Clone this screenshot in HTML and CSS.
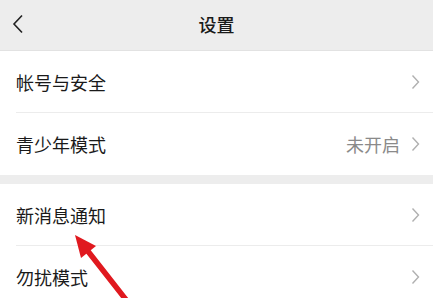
FILE: index.html
```html
<!DOCTYPE html>
<html lang="zh">
<head>
<meta charset="utf-8">
<link rel="stylesheet" href="styles.css">
</head>
<body>
<div class="page">
  <header class="topbar">
    <svg class="back" width="12" height="20" viewBox="0 0 12 20"><path d="M10 1.5 L2 10 L10 18.5" fill="none" stroke="#222" stroke-width="1.6"/></svg>
    <div class="title">设置</div>
  </header>
  <section class="group">
    <div class="row"><span class="label">帐号与安全</span><span class="right"><svg class="chev" width="9" height="16" viewBox="0 0 9 16"><path d="M1.5 1.5 L7.5 8 L1.5 14.5" fill="none" stroke="#b0b0b0" stroke-width="1.4"/></svg></span></div>
    <div class="row"><span class="label">青少年模式</span><span class="right"><span class="value">未开启</span><svg class="chev" width="9" height="16" viewBox="0 0 9 16"><path d="M1.5 1.5 L7.5 8 L1.5 14.5" fill="none" stroke="#b0b0b0" stroke-width="1.4"/></svg></span></div>
  </section>
  <section class="group">
    <div class="row"><span class="label">新消息通知</span><span class="right"><svg class="chev" width="9" height="16" viewBox="0 0 9 16"><path d="M1.5 1.5 L7.5 8 L1.5 14.5" fill="none" stroke="#b0b0b0" stroke-width="1.4"/></svg></span></div>
    <div class="row"><span class="label">勿扰模式</span><span class="right"><svg class="chev" width="9" height="16" viewBox="0 0 9 16"><path d="M1.5 1.5 L7.5 8 L1.5 14.5" fill="none" stroke="#b0b0b0" stroke-width="1.4"/></svg></span></div>
  </section>
  <svg class="arrow" width="80" height="80" viewBox="0 0 80 80">
    <path d="M67 81 L27 30" stroke="#e0191f" stroke-width="5.5" stroke-linecap="round"/>
    <path d="M15 15 L36 26 L21 38 Z" fill="#e0191f"/>
  </svg>
</div>
</body>
</html>
```
FILE: styles.css
```css
* { box-sizing: border-box; }
html, body { margin: 0; padding: 0; }
body {
  width: 433px;
  height: 298px;
  overflow: hidden;
  background: #ededed;
  font-family: "Noto Sans CJK SC", "Noto Sans", sans-serif;
}
.page { position: relative; height: 298px; }
.topbar {
  height: 51px;
  background: #ededed;
  border-bottom: 1px solid #e2e2e2;
  display: flex;
  align-items: center;
  justify-content: center;
  position: relative;
}
.back { position: absolute; left: 12px; top: 14px; }
.title { font-size: 18px; color: #1a1a1a; font-weight: 500; margin-top: -2px; }
.group { background: #fff; margin-bottom: 9px; }
.row {
  height: 62px;
  margin-left: 16px;
  padding-right: 13px;
  display: flex;
  align-items: center;
  justify-content: space-between;
  border-bottom: 1px solid #ececec;
}
.row:last-child { border-bottom: none; }
.label { font-size: 18px; color: #1a1a1a; }
.right { display: flex; align-items: center; gap: 11px; }
.value { font-size: 18px; color: #8a8a8a; }
.arrow { position: absolute; left: 60px; top: 220px; }
```
